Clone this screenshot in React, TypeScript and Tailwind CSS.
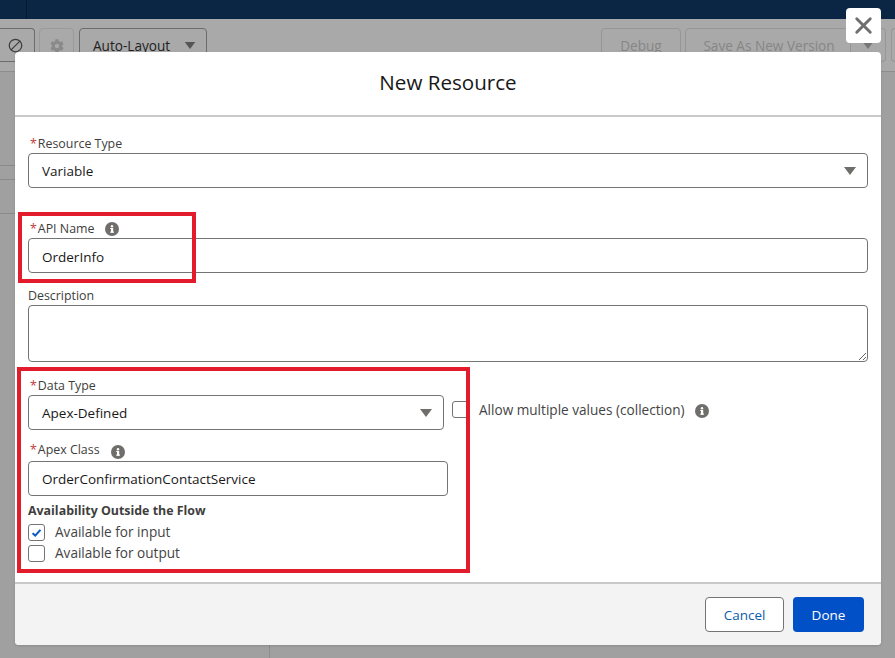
import { Ban, X } from "lucide-react";
import { FaCog } from "react-icons/fa";

function Arrow({ className }: { className: string }) {
  return (
    <svg viewBox="0 0 12 8" className={className}>
      <path d="M0 0h12L6 8z" fill="currentColor" />
    </svg>
  );
}

function Info({ className }: { className: string }) {
  return (
    <svg viewBox="0 0 14 14" className={className}>
      <circle cx="7" cy="7" r="7" fill="#706e6b" />
      <rect x="6" y="6" width="2.2" height="4.6" fill="#fff" />
      <rect x="5.2" y="9.6" width="3.8" height="1.1" fill="#fff" />
      <rect x="5.2" y="6" width="1.5" height="1" fill="#fff" />
      <circle cx="7" cy="4.2" r="1.2" fill="#fff" />
    </svg>
  );
}

function Label({ text, required }: { text: string; required?: boolean }) {
  return (
    <span className="text-[12.4px] leading-[18px] text-[#3e3e3c]">
      {required && <span className="text-[#c23934] mr-[1px] ml-[2px]">*</span>}
      {text}
    </span>
  );
}

function Field({ value, className }: { value: string; className?: string }) {
  return (
    <input
      readOnly
      value={value}
      className={`w-full h-[35px] border border-[#747474] rounded-[4px] px-[13px] text-[13.5px] text-[#181818] bg-white outline-none ${className ?? ""}`}
    />
  );
}

function SelectBox({ value }: { value: string }) {
  return (
    <div className="h-[35px] border border-[#747474] rounded-[4px] pl-[13px] pr-[11px] flex items-center justify-between text-[13.5px] text-[#181818]">
      <span className="pt-[2px]">{value}</span>
      <Arrow className="w-[12px] h-[8px] text-[#706e6b]" />
    </div>
  );
}

function Tool({ children, className }: { children: React.ReactNode; className: string }) {
  return (
    <div className={`h-[34px] border rounded-[4px] flex items-center ${className}`}>{children}</div>
  );
}

export default function App() {
  return (
    <div className="relative w-[895px] h-[658px] overflow-hidden bg-[#a0a0a0] font-['Open_Sans','Noto_Sans',sans-serif]">
      <div className="h-[19px] bg-[#0b2545]">
        <div className="w-[27px] h-full border-r border-[#07182e]" />
      </div>

      <div className="h-[53px] bg-[#a9a9a9] border-b border-[#8d8d8d] pt-[9px] flex">
        <Tool className="w-[35px] border-[#6c6c6c] justify-center pr-[3px] rounded-l-none border-l-0 text-[#3d3d3d]">
          <Ban size={15} className="-scale-x-100" />
        </Tool>
        <Tool className="w-[35px] ml-[4px] border-[#9a9a9a] justify-center text-[#8a8a8a]">
          <FaCog size={14} className="mt-[2px]" />
        </Tool>
        <Tool className="w-[128px] ml-[5px] border-[#6c6c6c] pl-[13px] pr-[10px] justify-between text-[13.6px] text-[#222]">
          <span className="pt-[3px]">Auto-Layout</span>
          <Arrow className="w-[12px] h-[7px] text-[#555]" />
        </Tool>
        <Tool className="w-[80px] ml-auto border-[#969696] justify-center text-[13.6px] text-[#868686]">
          <span className="pt-[3px]">Debug</span>
        </Tool>
        <Tool className="w-[166px] ml-[4px] pl-[2px] border-[#969696] justify-center text-[13.6px] text-[#868686] rounded-r-none">
          <span className="pt-[3px]">Save As New Version</span>
        </Tool>
        <Tool className="w-[35px] border-[#969696] border-l-0 justify-center text-[#777] rounded-l-none">
          <Arrow className="w-[12px] h-[8px]" />
        </Tool>
        <Tool className="w-[4px] ml-[5px] border-[#969696] border-r-0 rounded-r-none">{null}</Tool>
      </div>

      <div className="flex h-[586px]">
        <div className="w-[270px] border-r border-[#8d8d8d]">
          <div className="h-[94px] border-b border-[#8a8a8a]" />
          <div className="h-[14px] border-b border-[#8a8a8a]" />
          <div className="h-[34px] border-b border-[#8a8a8a]" />
        </div>
      </div>

      {/* dialog */}
      <div className="absolute left-[15px] top-[52px] w-[866px] h-[593px] bg-white rounded-[4px] flex flex-col shadow-sm">
        <div className="h-[65px] shrink-0 border-b-2 border-[#c9c9c9] flex items-center justify-center text-[20.6px] text-[#181818] pb-[2px]">
          New Resource
        </div>

        <div className="flex-1 pl-[13px] pr-[13px] pt-[17px]">
          <div className="h-[18px] pt-[2px] flex items-center"><Label text="Resource Type" required /></div>
          <div className="mt-[1px]"><SelectBox value="Variable" /></div>

          <div className="h-[18px] pt-[2px] mt-[31px] flex items-center gap-[11px]">
            <Label text="API Name" required />
            <Info className="w-[14px] h-[14px]" />
          </div>
          <div className="mt-[1px]"><Field value="OrderInfo" className="pt-[2px]" /></div>

          <div className="h-[18px] mt-[14px] flex items-center"><Label text="Description" /></div>
          <textarea readOnly className="block w-full h-[57px] border border-[#747474] rounded-[4px] bg-white outline-none" />

          <div className="flex mt-[14px]">
            <div className="w-[416px] shrink-0">
              <div className="h-[18px] pt-[2px] flex items-center"><Label text="Data Type" required /></div>
              <div className="mt-[1px]"><SelectBox value="Apex-Defined" /></div>
            </div>
            <div className="flex items-center h-[18px] mt-[25px] ml-[8px] text-[13.6px] text-[#444]">
              <span className="w-[17px] h-[17px] -mt-[1px] border border-[#747474] rounded-[3px] shrink-0" />
              <span className="ml-[10px]">Allow multiple values (collection)</span>
              <Info className="w-[14px] h-[14px] ml-[10px] mt-[2px]" />
            </div>
          </div>

          <div className="w-[420px] mt-[11px]">
            <div className="h-[18px] flex items-center gap-[11px]">
              <Label text="Apex Class" required />
              <Info className="w-[14px] h-[14px] mt-[4px]" />
            </div>
            <div className="mt-[2px]"><Field value="OrderConfirmationContactService" /></div>
          </div>

          <div className="mt-[6px] h-[18px] flex items-center text-[12.4px] font-bold text-[#3e3e3c]">
            Availability Outside the Flow
          </div>
          <div className="mt-[4px] flex items-center h-[17px] text-[13.6px] text-[#444]">
            <span className="w-[17px] h-[17px] border border-[#747474] rounded-[3px] flex items-center justify-center">
              <svg viewBox="0 0 9 8" className="w-[9px] h-[8px]">
                <path d="M0.6 4.2 3.2 6.6 8.4 0.8" fill="none" stroke="#0b5cc4" strokeWidth="2" />
              </svg>
            </span>
            <span className="ml-[10px]">Available for input</span>
          </div>
          <div className="mt-[4px] flex items-center h-[17px] text-[13.6px] text-[#444]">
            <span className="w-[17px] h-[17px] border border-[#747474] rounded-[3px]" />
            <span className="ml-[10px]">Available for output</span>
          </div>
        </div>

        <div className="h-[63px] shrink-0 bg-[#f3f3f3] border-t-2 border-[#c9c9c9] rounded-b-[4px] flex items-center justify-end gap-[9px] pr-[17px]">
          <button className="w-[79px] h-[35px] pt-[2px] bg-white border border-[#747474] rounded-[4px] text-[13.5px] text-[#0b5cab]">Cancel</button>
          <button className="w-[71px] h-[35px] pt-[2px] bg-[#0250c8] rounded-[4px] text-[13.5px] font-medium text-white">Done</button>
        </div>
      </div>

      {/* close button */}
      <button className="absolute left-[846px] top-[8px] w-[35px] h-[35px] bg-white rounded-[4px] flex items-center justify-center text-[#6f6f6f]">
        <X size={27} strokeWidth={2.6} />
      </button>

      {/* annotation boxes */}
      <div className="absolute left-[18px] top-[212px] w-[178px] h-[71px] border-[4px] border-[#e31c2d]" />
      <div className="absolute left-[17px] top-[367px] w-[453px] h-[206px] border-[4px] border-[#e31c2d]" />
    </div>
  );
}
